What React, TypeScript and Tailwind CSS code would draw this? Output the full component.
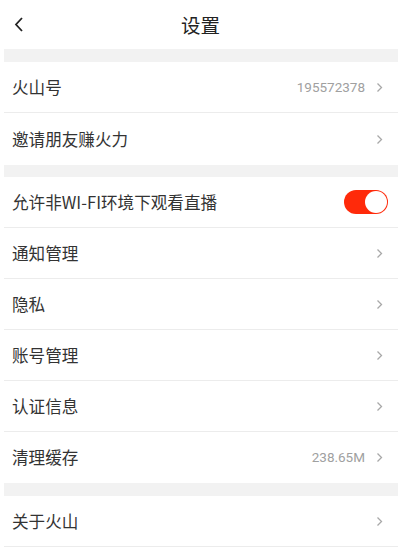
const font = { fontFamily: '"Noto Sans CJK SC", Roboto, sans-serif' };

function Chevron() {
  return (
    <svg width="7" height="11" viewBox="0 0 7 11" className="shrink-0">
      <path d="M1.5 1.5 L5.5 5.5 L1.5 9.5" fill="none" stroke="#a8a8a8" strokeWidth="1.3" />
    </svg>
  );
}

function Row({ label, value, last, tall }: { label: string; value?: string; last?: boolean; tall?: boolean }) {
  return (
    <div
      className={`${tall ? "h-[52px]" : "h-[51px]"} flex items-center pl-[8px] pr-[15px] ${
        last ? "" : "border-b border-[#ececec]"
      }`}
    >
      <span className="flex-1 text-[16.6px] text-[#333]">{label}</span>
      {value && <span className="text-[13.5px] text-[#a0a0a0] mr-[11px] font-['Roboto']">{value}</span>}
      <Chevron />
    </div>
  );
}

export default function App() {
  return (
    <div className="w-[401px] h-[556px] bg-white overflow-hidden" style={font}>
      {/* header */}
      <div className="relative h-[49px] flex items-center justify-center">
        <svg width="12" height="18" viewBox="0 0 12 18" className="absolute left-[13px] top-[16px]">
          <path d="M9 2 L3 8.5 L9 15" fill="none" stroke="#222" strokeWidth="1.8" />
        </svg>
        <span className="text-[19.5px] text-[#222]">设置</span>
      </div>

      <div className="ml-[4px] mr-[3px]">
        <div className="h-[13px] bg-[#f2f2f2]" />
        <Row label="火山号" value="195572378" />
        <Row label="邀请朋友赚火力" last tall />
        <div className="h-[12px] bg-[#f2f2f2]" />
        <div className="h-[51px] flex items-center pl-[8px] pr-[10px] border-b border-[#ececec]">
          <span className="flex-1 text-[16.6px] text-[#333]">允许非WI-FI环境下观看直播</span>
          <div className="w-[44px] h-[24px] rounded-full bg-[#ff2a0a] flex items-center justify-end pr-[1px]">
            <div className="w-[22px] h-[22px] rounded-full bg-white" />
          </div>
        </div>
        <Row label="通知管理" />
        <Row label="隐私" />
        <Row label="账号管理" />
        <Row label="认证信息" />
        <Row label="清理缓存" value="238.65M" last />
        <div className="h-[13px] bg-[#f2f2f2]" />
        <Row label="关于火山" />
      </div>
    </div>
  );
}
